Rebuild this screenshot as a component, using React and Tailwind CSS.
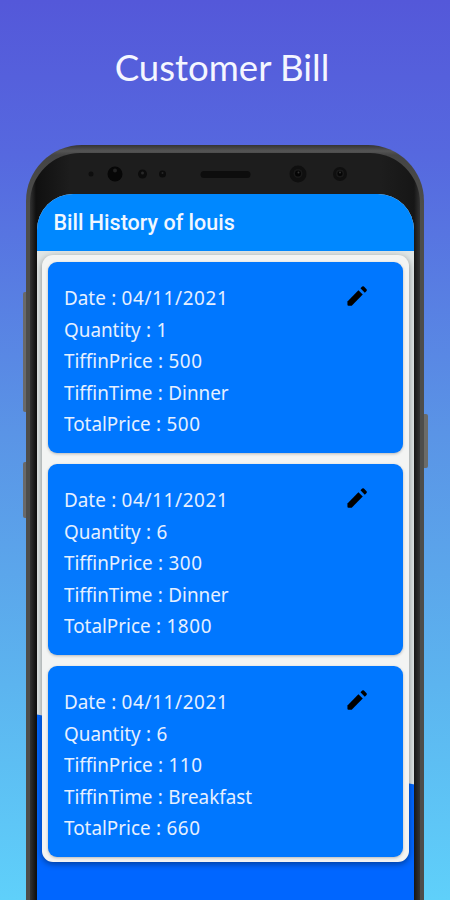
import React from "react";

const bills = [
  { date: "04/11/2021", quantity: 1, price: 500, time: "Dinner", total: 500 },
  { date: "04/11/2021", quantity: 6, price: 300, time: "Dinner", total: 1800 },
  { date: "04/11/2021", quantity: 6, price: 110, time: "Breakfast", total: 660 },
];

const PencilIcon = () => (
  <svg viewBox="0 0 24 24" className="mt-px h-[26px] w-[26px]" fill="#000">
    <path d="M3.200 17V20q0 .9.9.9H7.100L17.300 10.700l-4-4L3.200 17z" />
    <path d="M20.800 7.300a1.200 1.200 0 0 0 0-1.600l-2.400-2.400a1.200 1.200 0 0 0-1.600 0l-1.600 1.600 4 4 1.600-1.600z" />
  </svg>
);

const Sensors = () => (
  <svg viewBox="0 0 398 40" className="h-10 w-[398px]">
    <circle cx="65" cy="21" r="2.500" fill="#0e0e0e" />
    <circle cx="89" cy="21" r="7.500" fill="#070707" />
    <circle cx="89" cy="17.500" r="2" fill="#222" />
    <circle cx="116.500" cy="21" r="4.500" fill="#0c0c0c" />
    <circle cx="116.500" cy="20" r="1.500" fill="#292929" />
    <circle cx="136.500" cy="21" r="3.500" fill="#0c0c0c" />
    <circle cx="136.500" cy="20" r="1" fill="#292929" />
    <rect x="174.500" y="18" width="50" height="7" rx="3.500" fill="#0d0d0d" />
    <circle cx="272" cy="21" r="8.500" fill="#0f0f0f" />
    <circle cx="272" cy="20.500" r="4.500" fill="#191919" />
    <circle cx="272" cy="20.500" r="3" fill="#050505" />
    <circle cx="272.500" cy="19.500" r="1" fill="#333" />
    <circle cx="314" cy="21" r="7" fill="#0f0f0f" />
    <circle cx="314" cy="20.500" r="4" fill="#191919" />
    <circle cx="314" cy="20.500" r="2.500" fill="#050505" />
    <circle cx="314" cy="19.500" r="1" fill="#333" />
  </svg>
);

const Num = ({ children }) => (
  <span className="tracking-[0.7px]">{children}</span>
);

const BillCard = ({ bill }) => (
  <div className="flex h-[190.500px] shrink-0 items-start justify-between rounded-[9px] bg-[#0077ff] pt-[20px] pr-[33px] pl-[16px] shadow-[0_1px_3px_rgba(0,0,0,0.25)]">
    <div className="origin-left scale-x-[0.92] font-['Noto_Sans','Open_Sans',sans-serif] text-[20.500px] leading-[31.600px] [word-spacing:0.5px] whitespace-nowrap text-[#e6f0ff]">
      <p>
        Date : <Num>{bill.date}</Num>
      </p>
      <p>
        Quantity : <Num>{bill.quantity}</Num>
      </p>
      <p>
        TiffinPrice : <Num>{bill.price}</Num>
      </p>
      <p>TiffinTime : {bill.time}</p>
      <p>
        TotalPrice : <Num>{bill.total}</Num>
      </p>
    </div>
    <PencilIcon />
  </div>
);

const App = () => {
  return (
    <div className="relative flex h-[900px] w-[450px] flex-col items-center overflow-hidden bg-[linear-gradient(180deg,#5458d9_0%,#5668df_17%,#5a94e6_48%,#5cb4ef_76%,#5fd0fa_100%)]">
      <h1 className="mt-[43px] mr-[6px] h-[102px] shrink-0 font-['Lato',sans-serif] text-[36.600px] leading-[48px] whitespace-nowrap text-[#f4f6ff]">
        Customer Bill
      </h1>

      {/* Side buttons */}
      <div className="absolute top-[292px] left-[23px] h-[120px] w-[5px] rounded-l-xs bg-[#696969]" />
      <div className="absolute top-[462px] left-[23px] h-[56px] w-[5px] rounded-l-xs bg-[#696969]" />
      <div className="absolute top-[414px] left-[423px] h-[54px] w-[5px] rounded-r-xs bg-[#6b6b68]" />

      {/* Phone */}
      <div className="relative h-[800px] w-[398px] shrink-0 rounded-t-[56px] bg-[linear-gradient(180deg,#333_0px,#555_6px,#444_10px,#4d4d4b_60px)] px-[4px] pt-[8px]">
        <div className="flex h-full flex-col items-center rounded-t-[50px] bg-[linear-gradient(90deg,#333_0px,#101010_6px,#1d1d1d_40px,#1d1d1d_350px,#161616_384px,#333_390px)]">
          <div className="flex h-[41px] shrink-0 items-start">
            <Sensors />
          </div>
          <div className="flex w-[377px] flex-1 flex-col overflow-hidden rounded-t-[36px] bg-[linear-gradient(190.500deg,#dfe5e5_0,#dfe5e5_580px,#0066ff_581px)]">
            <header className="flex h-[57px] shrink-0 items-center bg-[#0088ff] pt-[2px] pl-[17px]">
              <h2 className="font-['Roboto',sans-serif] text-[21.500px] font-medium whitespace-nowrap text-[#f1f7ff]">
                Bill History of louis
              </h2>
            </header>
            <div className="mx-[5px] mt-[4px] flex h-[607px] shrink-0 flex-col gap-[11.500px] rounded-[11px] bg-[#f3f4f3] px-[6px] pt-[7px] shadow-[0_2px_6px_rgba(0,0,0,0.4)]">
              {bills.map((bill, idx) => (
                <BillCard key={idx} bill={bill} />
              ))}
            </div>
          </div>
        </div>
      </div>
    </div>
  );
};

export default App;
